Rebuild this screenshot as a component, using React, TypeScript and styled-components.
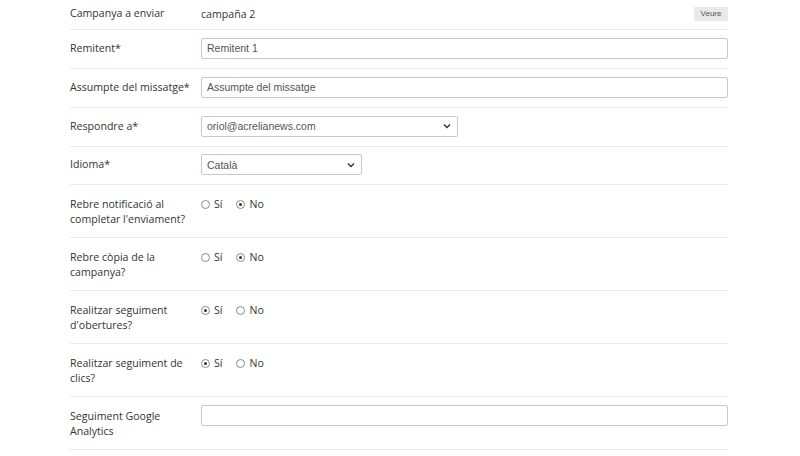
import React from "react";
import styled, { createGlobalStyle } from "styled-components";

const Global = createGlobalStyle`
  body { margin: 0; background: #fff; font-family: "Open Sans", sans-serif; font-size: 10.6px; color: #333; }
`;

const Form = styled.div`
  margin-left: 70px;
  width: 658px;
`;

const Row = styled.div<{ h: number; top?: boolean }>`
  display: grid;
  grid-template-columns: 131px 1fr;
  align-items: ${p => (p.top ? "start" : "center")};
  height: ${p => p.h}px;
  box-sizing: border-box;
  border-bottom: 1px solid #eaeaea;
  padding-top: ${p => (p.top ? 12 : 0)}px;
  padding-bottom: ${p => (p.top ? 0 : 2)}px;
`;

const Label = styled.div`
  line-height: 15px;
  color: #333;
`;

const Value = styled.div`
  display: flex;
  justify-content: space-between;
  align-items: center;
`;

const Button = styled.button`
  font-family: "Liberation Sans", Arial, sans-serif;
  font-size: 8px;
  background: #e9e9e9;
  border: none;
  color: #555;
  height: 14px;
  width: 34px;
  padding: 0;
`;

const Input = styled.div<{ w?: number }>`
  box-sizing: border-box;
  width: ${p => (p.w ? `${p.w}px` : "100%")};
  height: 21px;
  border: 1px solid #c8c8c8;
  border-radius: 2px;
  display: flex;
  align-items: center;
  justify-content: space-between;
  padding: 0 6px 0 5px;
  font-family: "Liberation Sans", Arial, sans-serif;
  font-size: 10.5px;
  color: #555;
`;

const Radios = styled.div`
  display: flex;
  gap: 14px;
  line-height: 15px;
`;

const Opt = styled.div`
  display: flex;
  align-items: center;
  gap: 4px;
`;

const Circle = styled.span<{ on?: boolean }>`
  width: 9px;
  height: 9px;
  border-radius: 50%;
  border: 1px solid #8a8a8a;
  display: inline-flex;
  align-items: center;
  justify-content: center;
  box-sizing: border-box;
  &::after {
    content: "";
    width: 3px;
    height: 3px;
    border-radius: 50%;
    background: ${p => (p.on ? "#333" : "transparent")};
  }
`;

const Chevron = () => (
  <svg width="8" height="6" viewBox="0 0 8 6">
    <path d="M1 1.5 L4 4.5 L7 1.5" stroke="#333" strokeWidth="1.4" fill="none" />
  </svg>
);

const Radio = ({ yes }: { yes: boolean }) => (
  <Radios>
    <Opt><Circle on={yes} />Sí</Opt>
    <Opt><Circle on={!yes} />No</Opt>
  </Radios>
);

export default function App() {
  return (
    <>
      <Global />
      <Form>
        <Row h={30}>
          <Label>Campanya a enviar</Label>
          <Value>campaña 2<Button>Veure</Button></Value>
        </Row>
        <Row h={39}>
          <Label>Remitent*</Label>
          <Input>Remitent 1</Input>
        </Row>
        <Row h={39}>
          <Label>Assumpte del missatge*</Label>
          <Input>Assumpte del missatge</Input>
        </Row>
        <Row h={39}>
          <Label>Respondre a*</Label>
          <Input w={257}>oriol@acrelianews.com<Chevron /></Input>
        </Row>
        <Row h={38}>
          <Label>Idioma*</Label>
          <Input w={161}>Català<Chevron /></Input>
        </Row>
        <Row h={53} top>
          <Label>Rebre notificació al<br />completar l'enviament?</Label>
          <Radio yes={false} />
        </Row>
        <Row h={53} top>
          <Label>Rebre còpia de la<br />campanya?</Label>
          <Radio yes={false} />
        </Row>
        <Row h={53} top>
          <Label>Realitzar seguiment<br />d'obertures?</Label>
          <Radio yes={true} />
        </Row>
        <Row h={53} top>
          <Label>Realitzar seguiment de<br />clics?</Label>
          <Radio yes={true} />
        </Row>
        <Row h={53} top>
          <Label>Seguiment Google<br />Analytics</Label>
          <Input style={{ marginTop: -4 }}></Input>
        </Row>
      </Form>
    </>
  );
}
